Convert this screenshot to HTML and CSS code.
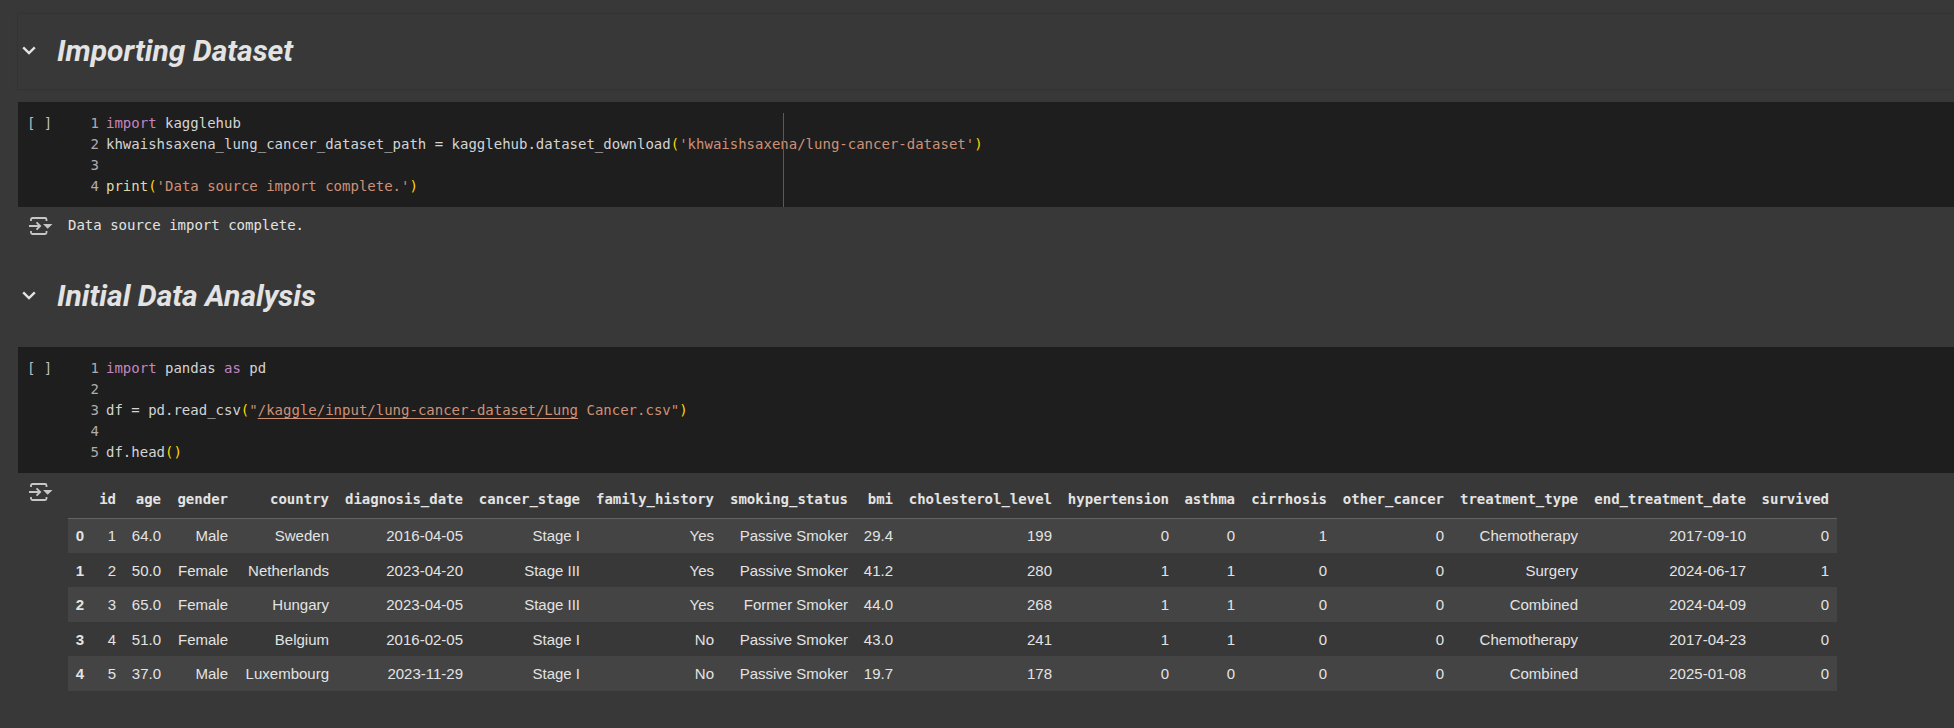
FILE: index.html
```
<!DOCTYPE html>
<html lang="en">
  <head>
    <meta charset="UTF-8" />
    <meta name="viewport" content="width=device-width, initial-scale=1.0" />
    <title>Lung Cancer Notebook</title>
    <link rel="stylesheet" href="styles.css">
  </head>
  <body>
    <main class="notebook">
      <!-- Importing -->
      <section class="text-cell selected">
        <button class="toggle" aria-label="Collapse section">
          <svg width="14" height="9" viewBox="0 0 14 9"><path d="M1.2 1.4 7 7 12.8 1.4" /></svg>
        </button>
        <h1>Importing Dataset</h1>
      </section>

      <section class="code-cell">
        <button class="run" aria-label="Run cell">[ ]</button>
        <div class="editor with-ruler">
          <div class="line"><span class="num">1</span><code><span class="kw">import</span> kagglehub</code></div>
          <div class="line"><span class="num">2</span><code>khwaishsaxena_lung_cancer_dataset_path = kagglehub.dataset_download<span class="paren">(</span><span class="str">'khwaishsaxena/lung-cancer-dataset'</span><span class="paren">)</span></code></div>
          <div class="line"><span class="num">3</span><code></code></div>
          <div class="line"><span class="num">4</span><code><span class="fn">print</span><span class="paren">(</span><span class="str">'Data source import complete.'</span><span class="paren">)</span></code></div>
        </div>
      </section>

      <section class="output">
        <button class="output-menu" aria-label="Output actions">
          <svg width="24" height="20" viewBox="0 0 24 20">
            <path class="stroke" d="M2 5V3.5Q2 2 3.5 2H16Q17.5 2 17.5 3.5V5M2 15V16.5Q2 18 3.5 18H16Q17.5 18 17.5 16.5V15M0 10H11M7.5 6.3 11.2 10 7.5 13.7" />
            <path d="M14 8H23.5L18.7 12.7Z" />
          </svg>
        </button>
        <pre class="stdout">Data source import complete.</pre>
      </section>

      <!-- Analysis -->
      <section class="text-cell">
        <button class="toggle" aria-label="Collapse section">
          <svg width="14" height="9" viewBox="0 0 14 9"><path d="M1.2 1.4 7 7 12.8 1.4" /></svg>
        </button>
        <h1>Initial Data Analysis</h1>
      </section>

      <section class="code-cell">
        <button class="run" aria-label="Run cell">[ ]</button>
        <div class="editor">
          <div class="line"><span class="num">1</span><code><span class="kw">import</span> pandas <span class="kw">as</span> pd</code></div>
          <div class="line"><span class="num">2</span><code></code></div>
          <div class="line"><span class="num">3</span><code>df = pd.read_csv<span class="paren">(</span><span class="str">"<a href="#">/kaggle/input/lung-cancer-dataset/Lung</a> Cancer.csv"</span><span class="paren">)</span></code></div>
          <div class="line"><span class="num">4</span><code></code></div>
          <div class="line"><span class="num">5</span><code>df.head<span class="paren">()</span></code></div>
        </div>
      </section>

      <section class="output">
        <button class="output-menu" aria-label="Output actions">
          <svg width="24" height="20" viewBox="0 0 24 20">
            <path class="stroke" d="M2 5V3.5Q2 2 3.5 2H16Q17.5 2 17.5 3.5V5M2 15V16.5Q2 18 3.5 18H16Q17.5 18 17.5 16.5V15M0 10H11M7.5 6.3 11.2 10 7.5 13.7" />
            <path d="M14 8H23.5L18.7 12.7Z" />
          </svg>
        </button>
        <table class="dataframe">
          <colgroup>
            <col class="c-index" /><col class="c-id" /><col class="c-age" /><col class="c-gender" /><col class="c-country" /><col class="c-14" />
            <col class="c-12" /><col class="c-14" /><col class="c-14" /><col class="c-age" /><col class="c-level" /><col class="c-12" />
            <col class="c-asthma" /><col class="c-cirrhosis" /><col class="c-12" /><col class="c-14" /><col class="c-end" /><col class="c-survived" />
          </colgroup>
          <thead>
            <tr>
              <th></th>
              <th>id</th>
              <th>age</th>
              <th>gender</th>
              <th>country</th>
              <th>diagnosis_date</th>
              <th>cancer_stage</th>
              <th>family_history</th>
              <th>smoking_status</th>
              <th>bmi</th>
              <th>cholesterol_level</th>
              <th>hypertension</th>
              <th>asthma</th>
              <th>cirrhosis</th>
              <th>other_cancer</th>
              <th>treatment_type</th>
              <th>end_treatment_date</th>
              <th>survived</th>
            </tr>
          </thead>
          <tbody>
            <tr><th>0</th><td>1</td><td>64.0</td><td>Male</td><td>Sweden</td><td>2016-04-05</td><td>Stage I</td><td>Yes</td><td>Passive Smoker</td><td>29.4</td><td>199</td><td>0</td><td>0</td><td>1</td><td>0</td><td>Chemotherapy</td><td>2017-09-10</td><td>0</td></tr>
            <tr><th>1</th><td>2</td><td>50.0</td><td>Female</td><td>Netherlands</td><td>2023-04-20</td><td>Stage III</td><td>Yes</td><td>Passive Smoker</td><td>41.2</td><td>280</td><td>1</td><td>1</td><td>0</td><td>0</td><td>Surgery</td><td>2024-06-17</td><td>1</td></tr>
            <tr><th>2</th><td>3</td><td>65.0</td><td>Female</td><td>Hungary</td><td>2023-04-05</td><td>Stage III</td><td>Yes</td><td>Former Smoker</td><td>44.0</td><td>268</td><td>1</td><td>1</td><td>0</td><td>0</td><td>Combined</td><td>2024-04-09</td><td>0</td></tr>
            <tr><th>3</th><td>4</td><td>51.0</td><td>Female</td><td>Belgium</td><td>2016-02-05</td><td>Stage I</td><td>No</td><td>Passive Smoker</td><td>43.0</td><td>241</td><td>1</td><td>1</td><td>0</td><td>0</td><td>Chemotherapy</td><td>2017-04-23</td><td>0</td></tr>
            <tr><th>4</th><td>5</td><td>37.0</td><td>Male</td><td>Luxembourg</td><td>2023-11-29</td><td>Stage I</td><td>No</td><td>Passive Smoker</td><td>19.7</td><td>178</td><td>0</td><td>0</td><td>0</td><td>0</td><td>Combined</td><td>2025-01-08</td><td>0</td></tr>
          </tbody>
        </table>
      </section>
    </main>
  </body>
</html>
```
FILE: styles.css
```
* {
  box-sizing: border-box;
}

body {
  margin: 0;
  background-color: #383838;
  color: #e3e3e3;
  font-family: 'Liberation Sans', Arial, sans-serif;
  font-size: 15px;
}

button {
  border: none;
  padding: 0;
  background: transparent;
  color: inherit;
  cursor: pointer;
}

svg {
  display: block;
}

code,
pre,
.run,
.num,
thead th {
  font-family: 'DejaVu Sans Mono', monospace;
  font-size: 14px;
}

.notebook {
  padding: 14px 0 0 18px;
}

/* text cells */
.text-cell {
  display: flex;
  align-items: center;
  gap: 21px;
  height: 75px;
  margin-bottom: 13px;
  padding: 0 0 2px 4px;
}

.selected {
  box-shadow: 0 0 2px #2b2b2b;
}

.text-cell h1 {
  margin: 0;
  font-family: Roboto, sans-serif;
  font-size: 30px;
  font-style: italic;
  font-weight: 700;
  line-height: 36px;
}

.toggle path {
  fill: none;
  stroke: #e3e3e3;
  stroke-width: 2.4;
}

/* code cells */
.code-cell {
  display: flex;
  align-items: flex-start;
  background-color: #1e1e1e;
  color: #d4d4d4;
}

.run {
  width: 72px;
  padding: 11px 0 0 9px;
  line-height: 21px;
  text-align: left;
  color: #bdbdbd;
}

.editor {
  position: relative;
  flex: 1;
  padding: 11px 0 10px;
}

/* 80 column ruler */
.with-ruler::after {
  content: '';
  position: absolute;
  top: 11px;
  bottom: 0;
  left: 693px;
  width: 1px;
  background-color: #5a5a5a;
}

.line {
  display: flex;
  gap: 7px;
  height: 21px;
  line-height: 21px;
  white-space: pre;
}

.num {
  width: 9px;
  text-align: right;
  color: #adadad;
}

.kw {
  color: #c586c0;
}

.fn {
  color: #dcdcaa;
}

.str,
.str a {
  color: #ce9178;
}

.str a {
  text-underline-offset: 3px;
}

.paren {
  color: #ffd700;
}

/* outputs */
.output {
  display: flex;
  align-items: flex-start;
  min-height: 52px;
}

.output-menu {
  width: 50px;
  padding: 9px 0 0 11px;
}

.output-menu path {
  fill: #c7c7c7;
}

.output-menu .stroke {
  fill: none;
  stroke: #c7c7c7;
  stroke-width: 1.8;
}

.stdout {
  margin: 0;
  padding-top: 8px;
  line-height: 20px;
}

.dataframe {
  border-collapse: collapse;
  text-align: right;
  white-space: nowrap;
}

.dataframe th,
.dataframe td {
  padding: 0 8px 0 6px;
  text-align: right;
}

.dataframe thead th {
  height: 45px;
  padding-top: 8px;
  border-bottom: 1px solid #636363;
}

.dataframe tbody tr {
  height: 34px;
}

.dataframe tbody tr:nth-child(odd) {
  height: 35px;
  background-color: #444;
}

/* dataframe column widths */
.c-index {
  width: 24px;
}

.c-id {
  width: 32px;
}

.c-age {
  width: 45px;
}

.c-gender {
  width: 67px;
}

.c-country {
  width: 101px;
}

.c-12 {
  width: 117px;
}

.c-14 {
  width: 134px;
}

.c-level {
  width: 159px;
}

.c-asthma {
  width: 66px;
}

.c-cirrhosis {
  width: 92px;
}

.c-end {
  width: 168px;
}

.c-survived {
  width: 83px;
}
```
